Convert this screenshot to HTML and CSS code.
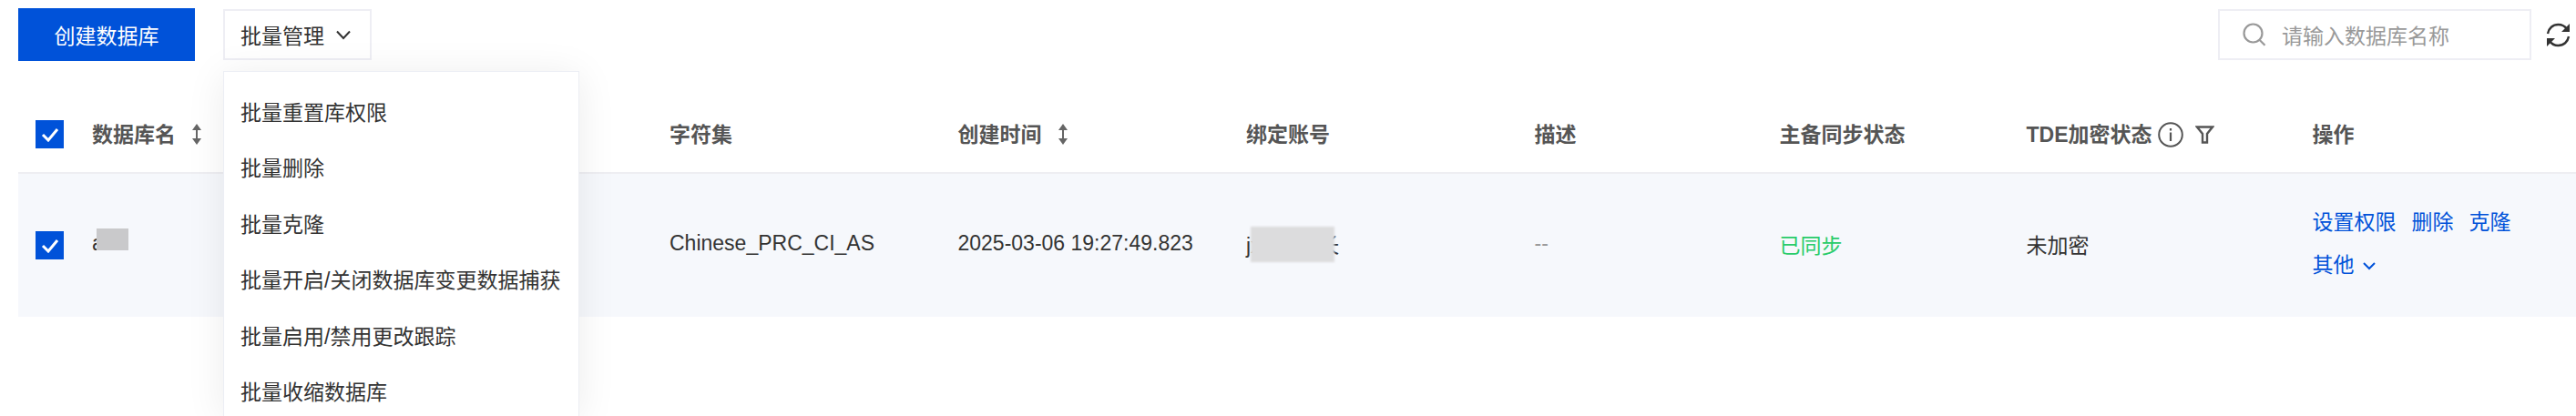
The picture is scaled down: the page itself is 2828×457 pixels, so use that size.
FILE: index.html
```html
<!DOCTYPE html>
<html lang="zh">
<head>
  <meta charset="UTF-8" />
  <meta name="viewport" content="width=device-width, initial-scale=1.0" />
  <title>数据库管理</title>
  <link rel="stylesheet" href="styles.css">
</head>
<body>
  <div class="toolbar">
    <button class="btn-create">创建数据库</button>
    <div class="batch">
      <button class="btn-batch">批量管理
        <svg class="chevron" viewBox="0 0 16 11" width="16" height="11"><path d="M1 1.5 8 9l7-7.500" fill="none" stroke="#333" stroke-width="2"/></svg>
      </button>
      <div class="menu">
        <div class="menu-item">批量重置库权限</div>
        <div class="menu-item">批量删除</div>
        <div class="menu-item">批量克隆</div>
        <div class="menu-item">批量开启/关闭数据库变更数据捕获</div>
        <div class="menu-item">批量启用/禁用更改跟踪</div>
        <div class="menu-item">批量收缩数据库</div>
      </div>
    </div>
    <div class="spacer"></div>
    <div class="search">
      <svg viewBox="0 0 26 26" width="26" height="26"><circle cx="11.500" cy="11.500" r="10" fill="none" stroke="#999" stroke-width="2.200"/><path d="m18.500 18.800 6 6" stroke="#999" stroke-width="2.200"/></svg>
      <span class="placeholder">请输入数据库名称</span>
    </div>
    <svg class="refresh" viewBox="0 0 27 27" width="27" height="27"><path d="M2 12C3 6 7.500 2 13.500 2c4 0 7.500 2 9.500 5M25 15c-1 6-5.500 10-11.500 10-4 0-7.500-2-9.500-5" fill="none" stroke="#333" stroke-width="2.400"/><path d="M26 1v9h-9zM1 26v-9h9z" fill="#333"/></svg>
  </div>

  <table class="db-table">
    <colgroup>
      <col class="col-check"><col class="col-name"><col class="col-wide"><col class="col-wide"><col class="col-wide"><col class="col-desc"><col class="col-sync"><col class="col-tde"><col>
    </colgroup>
    <thead>
      <tr>
        <th class="cell-check"><span class="checkbox"><svg viewBox="0 0 20 16" width="20" height="16"><path d="m2 8 6 6L18 2" fill="none" stroke="#fff" stroke-width="3"/></svg></span></th>
        <th><span class="head">数据库名 <svg class="sort" viewBox="0 0 10 23" width="10" height="23"><path d="M5 0 10 7H6v9h4l-5 7-5-7h4V7H0z" fill="#666"/></svg></span></th>
        <th>字符集</th>
        <th><span class="head">创建时间 <svg class="sort" viewBox="0 0 10 23" width="10" height="23"><path d="M5 0 10 7H6v9h4l-5 7-5-7h4V7H0z" fill="#666"/></svg></span></th>
        <th>绑定账号</th>
        <th>描述</th>
        <th>主备同步状态</th>
        <th><span class="head">TDE加密状态
          <svg class="info" viewBox="0 0 28 28" width="28" height="28"><circle cx="14" cy="14" r="12.800" fill="none" stroke="#555" stroke-width="2"/><path d="M14 11.500V21M14 7v2.500" stroke="#555" stroke-width="2.200"/></svg>
          <svg class="filter" viewBox="0 0 21 20" width="21" height="20"><path d="M2 1.500h17L13 9v9.500H8V9z" fill="none" stroke="#555" stroke-width="2.400"/></svg>
        </span></th>
        <th>操作</th>
      </tr>
    </thead>
    <tbody>
      <tr>
        <td class="cell-check"><span class="checkbox"><svg viewBox="0 0 20 16" width="20" height="16"><path d="m2 8 6 6L18 2" fill="none" stroke="#fff" stroke-width="3"/></svg></span></td>
        <td><span class="masked">a<span class="mask-name"></span></span></td>
        <td>Chinese_PRC_CI_AS</td>
        <td>2025-03-06 19:27:49.823</td>
        <td><span class="masked">jxxxxxxi长<span class="mask-account"></span></span></td>
        <td class="muted">--</td>
        <td class="ok">已同步</td>
        <td>未加密</td>
        <td>
          <div class="actions"><a>设置权限</a><a>删除</a><a>克隆</a></div>
          <div class="actions"><a class="more">其他 <svg viewBox="0 0 14 9" width="14" height="9"><path d="m1 1 6 6 6-6" fill="none" stroke="#0052d9" stroke-width="2"/></svg></a></div>
        </td>
      </tr>
    </tbody>
  </table>
</body>
</html>
```

FILE: styles.css
```css
html, body {
  height: 100%;
  overflow: hidden;
}
body {
  margin: 0;
  padding-left: 20px;
  background: #fff;
  color: #333;
  font-family: "Liberation Sans", "Noto Sans CJK SC", sans-serif;
  font-size: 23px;
}
button {
  font-family: inherit;
  font-size: 23px;
  cursor: pointer;
}
.toolbar {
  display: flex;
  align-items: center;
  height: 58px;
  margin-top: 9px;
  margin-bottom: 39px;
  padding-right: 6px;
}
.btn-create {
  width: 194px;
  height: 58px;
  background: #0052d9;
  color: #fff;
  border: none;
}
.batch {
  position: relative;
  margin-left: 31px;
}
.btn-batch {
  display: flex;
  align-items: center;
  gap: 13px;
  width: 163px;
  height: 56px;
  padding: 0 0 0 17px;
  background: #fff;
  color: #333;
  border: 2px solid #eeeef4;
  white-space: nowrap;
}
.menu {
  position: absolute;
  top: 68px;
  left: 0;
  z-index: 5;
  width: 391px;
  height: 379px;
  box-sizing: border-box;
  padding: 15px 0 0;
  overflow: hidden;
  background: #fff;
  border: 1px solid #eceef4;
  border-bottom: none;
  box-shadow: 0 4px 40px rgba(0,0,0,0.08);
}
.menu-item {
  height: 61.4px;
  line-height: 61.4px;
  padding-left: 18px;
  white-space: nowrap;
}
.spacer {
  flex: 1;
}
.search {
  display: flex;
  align-items: center;
  gap: 17px;
  width: 344px;
  height: 56px;
  box-sizing: border-box;
  padding-left: 25px;
  border: 2px solid #eeeef4;
}
.placeholder {
  color: #999;
}
.refresh {
  margin-left: 16px;
}
.db-table {
  width: 2808px;
  table-layout: fixed;
  border-collapse: collapse;
}
.col-check { width: 81px; }
.col-name { width: 634px; }
.col-wide { width: 316.5px; }
.col-desc { width: 269px; }
.col-sync { width: 271px; }
.col-tde { width: 314px; }
th {
  box-sizing: border-box;
  height: 84px;
  padding: 0 0 3px;
  text-align: left;
  color: #555;
  font-weight: 700;
  white-space: nowrap;
  border-bottom: 2px solid #eeeef2;
}
td {
  box-sizing: border-box;
  height: 158px;
  padding: 0 0 4px;
  background: #f6f8fc;
  white-space: nowrap;
}
th.cell-check, td.cell-check {
  padding: 0 0 0 19px;
}
.checkbox {
  display: flex;
  align-items: center;
  justify-content: center;
  width: 31px;
  height: 31px;
  background: #0052d9;
}
.head {
  display: inline-flex;
  align-items: center;
  gap: 9px;
}
.head .sort {
  margin-left: 9px;
  margin-top: 3px;
}
.head .info {
  margin-left: -3px;
  margin-top: 3px;
}
.head .filter {
  margin-left: 4px;
  margin-top: 3px;
}
.masked {
  position: relative;
  display: inline-block;
}
.mask-name {
  position: absolute;
  left: 5px;
  top: -3px;
  width: 35px;
  height: 24px;
  background: #c9c9cb;
}
.mask-account {
  position: absolute;
  left: 5px;
  top: -2px;
  width: 92px;
  height: 39px;
  background: #dcdcdd;
  filter: blur(1px);
}
.muted {
  color: #999;
}
.ok {
  color: #29cc6a;
}
.actions {
  display: flex;
  gap: 17px;
  height: 47px;
  line-height: 47px;
}
.actions a {
  color: #0052d9;
}
.more svg {
  margin-left: 3px;
  vertical-align: 2px;
}
```
